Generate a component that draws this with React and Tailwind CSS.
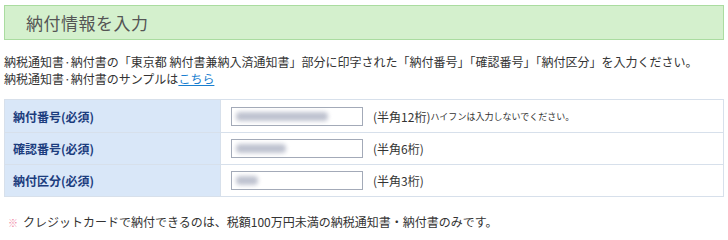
import React from 'react';

const rows = [
    { label: '納付番号(必須)', hint: '(半角12桁)', note: 'ハイフンは入力しないでください。', blur: 'w-[92px]' },
    { label: '確認番号(必須)', hint: '(半角6桁)', note: '', blur: 'w-[50px]' },
    { label: '納付区分(必須)', hint: '(半角3桁)', note: '', blur: 'w-[22px]' },
];

export default function App() {
    return (
        <div className="px-[4px] pt-[5px] text-[#333] text-[12px] leading-[17px]" style={{ fontFamily: '"Noto Sans CJK JP", "Noto Sans", sans-serif' }}>
            <div className="h-[35px] flex items-center bg-[#d4f0cd] border border-[#aadca0]">
                <div className="w-[21px] shrink-0" />
                <h1 className="text-[17px] text-[#555] tracking-[0.5px]">納付情報を入力</h1>
            </div>

            <div className="mt-[13px]">
                <p>納税通知書·納付書の「東京都 納付書兼納入済通知書」部分に印字された「納付番号」「確認番号」「納付区分」を入力ください。</p>
                <p>納税通知書·納付書のサンプルは<a href="#" className="text-[#1a7fd0] underline">こちら</a></p>
            </div>

            <div className="mt-[12px] border border-[#d7e0eb]">
                {rows.map((row, i) => (
                    <div key={row.label} className={`flex h-[32px] ${i > 0 ? 'border-t border-[#d7e0eb]' : ''}`}>
                        <div className="w-[216px] shrink-0 bg-[#d9e7f8] border-r border-[#d7e0eb] flex items-center pl-[8px] font-bold text-[#1c3d7e]">
                            {row.label}
                        </div>
                        <div className="flex items-center pl-[10px]">
                            <div className="w-[132px] h-[19px] border border-[#a3aab8] bg-white overflow-hidden flex items-center">
                                <div className={`ml-[4px] h-[9px] rounded-sm bg-[#bfc3d0] blur-[2px] ${row.blur}`} />
                            </div>
                            <span className="ml-[10px]">{row.hint}</span>
                            {row.note && <span className="text-[9px]">{row.note}</span>}
                        </div>
                    </div>
                ))}
            </div>

            <p className="mt-[16px] pl-[4px]">
                <span className="text-[#f08aa6] text-[10px] mr-[5px]">※</span>
                クレジットカードで納付できるのは、税額100万円未満の納税通知書・納付書のみです。
            </p>
        </div>
    );
}
